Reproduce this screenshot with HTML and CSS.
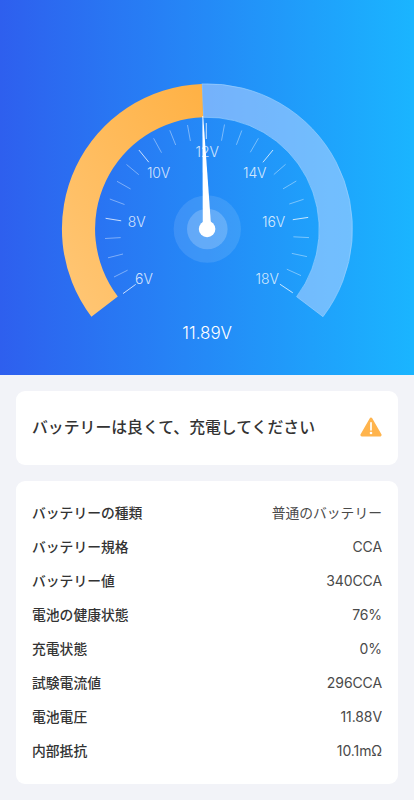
FILE: index.html
```html
<!DOCTYPE html>
<html lang="ja">

<head>
    <meta charset="UTF-8">
    <meta name="viewport" content="width=device-width, initial-scale=1.0">
    <title>バッテリーテスト</title>
    <link rel="stylesheet" href="styles.css">
</head>

<body>
    <header class="gauge-panel">
        <svg class="gauge" viewBox="0 0 414 375">
            <defs>
                <linearGradient id="level" x1="0" y1="1" x2="1" y2="0">
                    <stop offset="0" stop-color="#ffc777" />
                    <stop offset="1" stop-color="#ffb144" />
                </linearGradient>
            </defs>

            <!-- track and level -->
            <path class="track" d="M201.8 83.9A145.2 145.2 0 0 1 323 316.7L296.6 296.7A112 112 0 0 0 203.2 117.3Z" />
            <path fill="url(#level)" d="M91.4 316.7A145.2 145.2 0 0 1 201.8 83.9L203.2 117.3A111.7 111.7 0 0 0 117.8 296.5Z" />

            <!-- scale -->
            <path class="tick-minor" d="M114 277L127.6 270.2M108 257.8L123 254M105 238.5L120.7 237.6M109.8 199L124.5 204.5M117 181.3L130.6 189M126.5 164.5L138.8 174.7M153.6 138.3L161.5 152.7M169.8 130.3L175.7 145M187.5 125L190.4 141M224.5 124.5L221.5 140.7M241.8 130.5L236.4 144.8M258.4 138.3L250.3 152.3M285.6 164.3L273.8 174.6M296.3 181L283 188.9M303.6 199.3L289.3 204M309 237.6L293.4 236.8M306.9 256.6L291.8 253.4M301 275.6L286.8 269.2" />
            <path class="tick-major" d="M123 293.6L135.7 284.4M105.6 218.3L121.2 220.8M138.9 150L148.8 162.2M273 150L262.9 162.3M308.2 217.4L292.8 219.7M292.8 292.8L279.9 284.2" />
            <path class="tick-major" d="M206.3 123V139" />
            <g class="scale-text">
                <text x="143.9" y="283.7">6V</text>
                <text x="136.6" y="227.3">8V</text>
                <text x="158.5" y="178">10V</text>
                <text x="207.2" y="156.8">12V</text>
                <text x="254.7" y="178">14V</text>
                <text x="273.5" y="227.3">16V</text>
                <text x="267.2" y="283.7">18V</text>
            </g>

            <!-- needle -->
            <circle cx="207.3" cy="229" r="33.7" fill="#fff" fill-opacity=".11" />
            <circle cx="207.3" cy="229" r="20.3" fill="#fff" fill-opacity=".2" />
            <path fill="#fff" d="M202.4 116H203.2L211.3 229H202.8Z" />
            <circle cx="207.1" cy="229" r="8.3" fill="#fff" />

            <text class="reading" x="207.1" y="338.5">11.89V</text>
        </svg>
    </header>

    <main class="content">
        <section class="card status">
            <h1 class="status-text">バッテリーは良くて、充電してください</h1>
            <svg class="status-icon" width="22" height="20" viewBox="0 0 22 20">
                <path d="M11 2L20.2 18H1.8Z" fill="#ffb44d" stroke="#ffb44d" stroke-width="2.8" stroke-linejoin="round" />
                <path d="M11 5.8V12.8" stroke="#fff" stroke-width="1.7" stroke-linecap="round" />
                <circle cx="11" cy="16" r="1.3" fill="#fff" />
            </svg>
        </section>

        <dl class="card details">
            <div class="row"><dt>バッテリーの種類</dt><dd class="ja">普通のバッテリー</dd></div>
            <div class="row"><dt>バッテリー規格</dt><dd>CCA</dd></div>
            <div class="row"><dt>バッテリー値</dt><dd>340CCA</dd></div>
            <div class="row"><dt>電池の健康状態</dt><dd>76%</dd></div>
            <div class="row"><dt>充電状態</dt><dd>0%</dd></div>
            <div class="row"><dt>試験電流値</dt><dd>296CCA</dd></div>
            <div class="row"><dt>電池電圧</dt><dd>11.88V</dd></div>
            <div class="row"><dt>内部抵抗</dt><dd>10.1mΩ</dd></div>
        </dl>
    </main>
</body>

</html>
```
FILE: styles.css
```css
* {
    box-sizing: border-box;
}

body {
    margin: 0;
    font-family: "Noto Sans CJK JP", sans-serif;
    color: #333;
    background-color: #f2f3f8;
}

.gauge-panel {
    height: 374.5px;
    overflow: hidden;
    background: linear-gradient(90deg, #2e5fee 0%, #248af7 50%, #1ab5ff 100%);
}

.gauge {
    display: block;
    width: 414px;
    height: 375px;
}

.track {
    fill: rgba(188, 214, 255, 0.53);
    stroke: rgba(160, 212, 255, 0.6);
    stroke-width: 1;
}

.tick-minor,
.tick-major {
    fill: none;
    stroke: #fff;
    stroke-opacity: 0.4;
    stroke-width: 1;
}

.tick-major {
    stroke-opacity: 0.75;
}

.scale-text,
.reading {
    font-family: Inter, sans-serif;
    font-weight: 300;
    text-anchor: middle;
    fill: #fff;
}

.scale-text {
    font-size: 14px;
    letter-spacing: -0.1px;
    fill-opacity: 0.8;
}

.reading {
    font-size: 17px;
    letter-spacing: 0;
}

.content {
    display: flex;
    flex-direction: column;
    gap: 16px;
    padding: 16px;
}

.card {
    margin: 0;
    background: #fff;
    border-radius: 9px;
}

.status {
    display: flex;
    align-items: center;
    justify-content: space-between;
    height: 74px;
    padding: 0 16px;
}

.status-text {
    margin: 0;
    padding-bottom: 1px;
    font-size: 15.85px;
    font-weight: 500;
    line-height: 24px;
}

.status-icon {
    margin-bottom: 1px;
}

.details {
    padding: 15px 16px 16px;
    height: 303.5px;
}

.row {
    display: flex;
    align-items: center;
    justify-content: space-between;
    height: 34px;
    font-size: 13.8px;
    line-height: 20px;
}

.row dt {
    padding-bottom: 1px;
    font-weight: 500;
}

.row dd {
    margin: 0;
    font-family: Inter, sans-serif;
    font-size: 14px;
    letter-spacing: -0.1px;
    color: #4a4a4a;
}

.row .ja {
    padding-bottom: 1px;
    font-family: "Noto Sans CJK JP", sans-serif;
    font-size: 13.8px;
    letter-spacing: 0;
}
```
